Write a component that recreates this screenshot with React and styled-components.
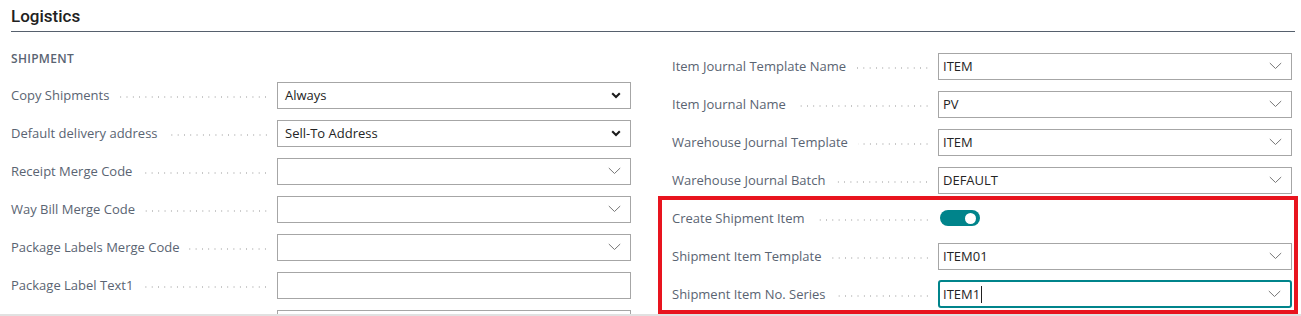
import React from "react";
import styled, { createGlobalStyle } from "styled-components";

const Global = createGlobalStyle`
  html, body { margin: 0; padding: 0; background: #fff; }
  body { font-family: "Open Sans", "Segoe UI", Roboto, sans-serif; }
  * { box-sizing: border-box; }
`;

const Page = styled.div`
  height: 316px;
  overflow: hidden;
  border-bottom: 2px solid #e1e1e1;
  padding: 0 6px 0 11px;
`;

const Title = styled.h2`
  margin: 0;
  height: 32px;
  padding-top: 5px;
  font-family: Roboto, "Open Sans", sans-serif;
  font-size: 17px;
  font-weight: 500;
  color: #212121;
  line-height: 22px;
  border-bottom: 1px solid #56606d;
`;

const Columns = styled.div`
  display: grid;
  grid-template-columns: 620px 620px;
  column-gap: 41px;
  align-items: start;
`;

const Column = styled.div`
  display: flex;
  flex-direction: column;
  gap: 10px;
  padding-top: ${(p) => p.$top}px;
`;

const GroupHeading = styled.div`
  font-size: 12px;
  font-weight: 600;
  letter-spacing: 0.3px;
  color: #5a6472;
  line-height: 16px;
  margin-top: 19px;
  margin-bottom: 4px;
`;

const Row = styled.div`
  display: flex;
  align-items: center;
  height: 28px;
`;

const Label = styled.div`
  width: 266px;
  flex: none;
  display: flex;
  align-items: center;
  padding-right: 8px;
  font-size: 13px;
  color: #5a6472;
  white-space: nowrap;
`;

const Leader = styled.span`
  flex: 1;
  height: 2px;
  margin-left: 10px;
  margin-top: 3px;
  background-image: radial-gradient(circle, #c4c4c4 0.8px, transparent 1px);
  background-size: 6.3px 2px;
  background-position: right center;
  background-repeat: repeat-x;
`;

const Field = styled.div`
  flex: 1;
  height: ${(p) => (p.$focused ? 28 : 27)}px;
  display: flex;
  align-items: center;
  padding: 0 8px 0 ${(p) => (p.$focused ? 3 : p.$native ? 7 : 4)}px;
  border: ${(p) => (p.$focused ? "2px solid #00848b" : "1px solid #a6a6a6")};
  border-radius: ${(p) => (p.$focused ? 3 : 0)}px;
  font-size: 13px;
  color: #242424;
  background: #fff;
`;

const Value = styled.span`
  flex: 1;
  white-space: nowrap;
`;

const Caret = styled.span`
  display: inline-block;
  width: 1px;
  height: 17px;
  background: #212121;
  vertical-align: -4px;
  margin-left: 1px;
`;

const Toggle = styled.div`
  width: 40px;
  height: 16px;
  border-radius: 8px;
  background: #00848b;
  margin-left: 2px;
  display: flex;
  align-items: center;
  justify-content: flex-end;
  padding-right: 4px;
`;

const Knob = styled.span`
  width: 11px;
  height: 11px;
  border-radius: 50%;
  background: #fff;
`;

const Highlight = styled.div`
  display: flex;
  flex-direction: column;
  gap: 10px;
  margin: -8px -6px 0 -14px;
  padding: 4px 2px 2px 10px;
  border: 4px solid #e8141e;
`;

const BoldChevron = () => (
  <svg width="10" height="7" viewBox="0 0 10 7" style={{ marginRight: 1 }}>
    <path d="M1.2 1.3 L5 5 L8.8 1.3" fill="none" stroke="#1b1b1b" strokeWidth="2.1" />
  </svg>
);

const ThinChevron = () => (
  <svg width="13" height="8" viewBox="0 0 13 8" style={{ marginRight: 1 }}>
    <path d="M0.8 1 L6.5 6.5 L12.2 1" fill="none" stroke="#777" strokeWidth="1" />
  </svg>
);

const FieldRow = ({ label, value, kind, focused, caret }) => (
  <Row>
    <Label>
      {label}
      <Leader />
    </Label>
    {kind === "toggle" ? (
      <Toggle>
        <Knob />
      </Toggle>
    ) : (
      <Field $focused={focused} $native={kind === "select"}>
        <Value>
          {value}
          {caret && <Caret />}
        </Value>
        {kind === "select" && <BoldChevron />}
        {kind === "lookup" && <ThinChevron />}
      </Field>
    )}
  </Row>
);

const left = [
  { label: "Copy Shipments", value: "Always", kind: "select" },
  { label: "Default delivery address", value: "Sell-To Address", kind: "select" },
  { label: "Receipt Merge Code", value: "", kind: "lookup" },
  { label: "Way Bill Merge Code", value: "", kind: "lookup" },
  { label: "Package Labels Merge Code", value: "", kind: "lookup" },
  { label: "Package Label Text1", value: "", kind: "text" },
  { label: "", value: "", kind: "text" },
];

const right = [
  { label: "Item Journal Template Name", value: "ITEM", kind: "lookup" },
  { label: "Item Journal Name", value: "PV", kind: "lookup" },
  { label: "Warehouse Journal Template", value: "ITEM", kind: "lookup" },
  { label: "Warehouse Journal Batch", value: "DEFAULT", kind: "lookup" },
];

const highlighted = [
  { label: "Create Shipment Item", kind: "toggle" },
  { label: "Shipment Item Template", value: "ITEM01", kind: "lookup" },
  { label: "Shipment Item No. Series", value: "ITEM1", kind: "lookup", focused: true, caret: true },
];

export default function App() {
  return (
    <>
      <Global />
      <Page>
        <Title>Logistics</Title>
        <Columns>
          <Column $top={0}>
            <GroupHeading>SHIPMENT</GroupHeading>
            {left.map((f, i) => (
              <FieldRow key={i} {...f} />
            ))}
          </Column>
          <Column $top={20}>
            {right.map((f) => (
              <FieldRow key={f.label} {...f} />
            ))}
            <Highlight>
              {highlighted.map((f) => (
                <FieldRow key={f.label} {...f} />
              ))}
            </Highlight>
          </Column>
        </Columns>
      </Page>
    </>
  );
}
